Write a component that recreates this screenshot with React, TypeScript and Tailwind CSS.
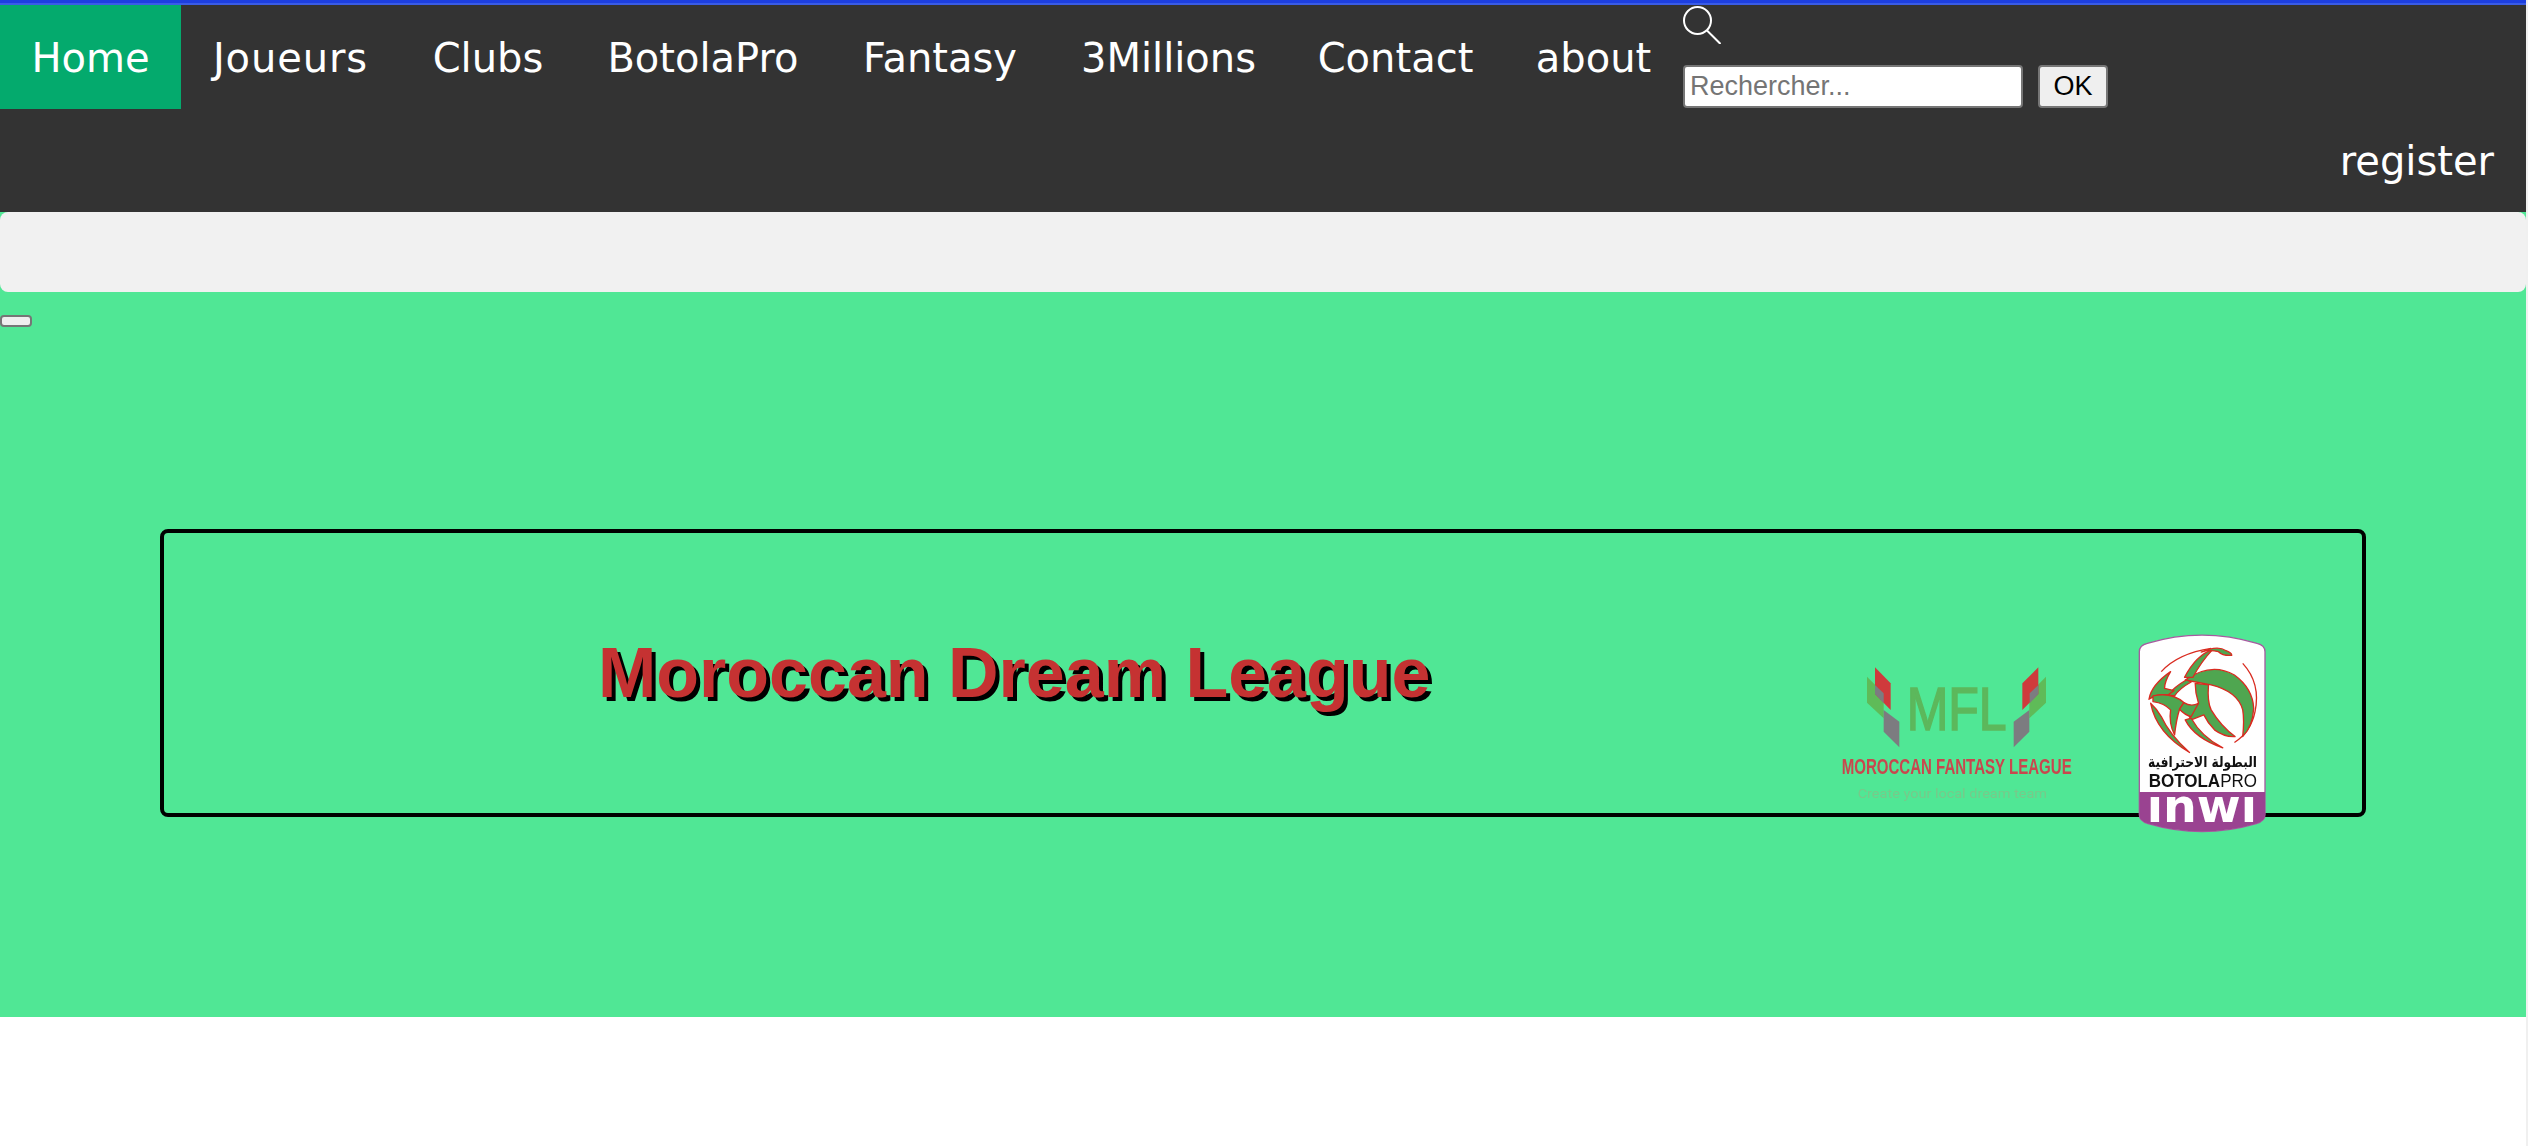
const links = [
  { label: "Home", cls: "w-[181px] bg-[#04aa6d]" },
  { label: "Joueurs", cls: "w-[219px] tracking-[0.9px]" },
  { label: "Clubs", cls: "w-[176px]" },
  { label: "BotolaPro", cls: "w-[254px]" },
  { label: "Fantasy", cls: "w-[220px]" },
  { label: "3Millions", cls: "w-[237px]" },
  { label: "Contact", cls: "w-[217px]" },
  { label: "about", cls: "w-[179px]" },
];

function MflLogo() {
  return (
    <svg viewBox="0 0 780 480" className="w-[260px] h-[160px] shrink-0 blur-[0.5px]">
      {/* left wing */}
      <polygon points="138,80 188,130 188,205 138,158" fill="#5fbb58" />
      <polygon points="162,52 209,100 209,180 162,132" fill="#cf3a3c" />
      <polygon points="162,105 188,130 188,160 162,132" fill="#7c7c80" />
      <polygon points="188,180 235,215 235,292 188,245" fill="#7c7c80" />
      {/* right wing */}
      <polygon points="675,80 625,130 625,205 675,158" fill="#5fbb58" />
      <polygon points="652,52 604,100 604,180 652,132" fill="#cf3a3c" />
      <polygon points="652,105 626,130 626,160 652,132" fill="#7c7c80" />
      <polygon points="625,180 578,215 578,292 625,245" fill="#7c7c80" />
      <text x="257" y="240" fontFamily="Liberation Sans, sans-serif" fontSize="184" fill="#5cb85c" stroke="#5cb85c" strokeWidth="5" textLength="300" lengthAdjust="spacingAndGlyphs">MFL</text>
      <text x="62" y="372" fontFamily="Liberation Sans, sans-serif" fontWeight="700" fontSize="66" fill="#c9474e" textLength="690" lengthAdjust="spacingAndGlyphs">MOROCCAN FANTASY LEAGUE</text>
      <text x="110" y="443" fontFamily="Roboto, sans-serif" fontSize="40" fill="#78c98a" textLength="568" lengthAdjust="spacingAndGlyphs">Create your local dream team</text>
    </svg>
  );
}

// green blades of the crest, in 3x crop coordinates
const blades = [
  "M222 180 Q300 125 370 165 Q425 205 428 265 Q425 320 395 350 Q400 300 395 270 Q380 215 300 195 Z",
  "M305 88 Q255 105 220 172 L245 172 Q270 125 305 88 Z",
  "M270 96 Q320 75 345 92 Q362 98 362 106 Q335 108 322 95 Q295 88 270 96 Z",
  "M225 180 Q190 200 170 225 L190 228 Q205 205 240 186 Z",
  "M252 190 L292 195 Q288 245 300 270 Q330 320 372 350 Q340 352 310 330 Q290 310 278 285 L240 300 L232 285 L262 250 Q252 220 252 190 Z",
  "M113 238 Q120 195 178 155 Q160 185 160 205 L188 212 L170 225 Q135 222 113 238 Z",
  "M125 228 Q180 215 218 248 L205 268 Q195 300 190 345 Q172 310 178 270 Q160 250 125 245 Z",
  "M218 248 Q240 262 262 250 L240 290 Q220 285 205 268 Z",
  "M118 250 Q135 340 235 398 Q175 345 150 290 Q135 265 118 250 Z",
  "M222 300 Q250 355 335 384 Q270 350 240 295 Z",
];

function BotolaLogo() {
  return (
    <svg viewBox="80 42 385 598" className="w-[128px] h-[199px] shrink-0 blur-[0.3px]">
      <defs>
        <clipPath id="badge">
          <path d="M84 95 Q84 76 108 70 Q272 20 438 70 Q462 76 462 95 L462 585 Q462 605 436 612 Q272 660 110 612 Q84 605 84 585 Z" />
        </clipPath>
      </defs>
      <path d="M84 95 Q84 76 108 70 Q272 20 438 70 Q462 76 462 95 L462 585 Q462 605 436 612 Q272 660 110 612 Q84 605 84 585 Z" fill="#ffffff" stroke="#a75aa0" strokeWidth="4" />
      <rect x="80" y="517" width="385" height="130" fill="#9a4391" clipPath="url(#badge)" />
      {/* crest */}
      <path d="M395 130 Q450 190 432 275 Q420 335 370 368" fill="none" stroke="#d92b20" strokeWidth="4" />
      <path d="M150 155 Q200 100 300 85" fill="none" stroke="#d92b20" strokeWidth="4" />
      {blades.map((d) => (
        <path key={d} d={d} fill="#4fa650" stroke="#d92b20" strokeWidth="4" strokeLinejoin="round" />
      ))}
      {/* wording */}
      <text x="110" y="442" direction="rtl" fontFamily="DejaVu Sans, sans-serif" fontWeight="700" fontSize="44" fill="#111111" textLength="328" lengthAdjust="spacingAndGlyphs" textAnchor="end">البطولة الاحترافية</text>
      <text x="112" y="503" fontFamily="Liberation Sans, sans-serif" fontSize="56" fill="#111111" textLength="326" lengthAdjust="spacingAndGlyphs">
        <tspan fontWeight="700">BOTOLA</tspan>
        <tspan>PRO</tspan>
      </text>
      <text x="106" y="606" fontFamily="DejaVu Sans, sans-serif" fontWeight="700" fontSize="140" fill="#ffffff" textLength="332" lengthAdjust="spacingAndGlyphs">ınwı</text>
    </svg>
  );
}

export default function App() {
  return (
    <div className="min-h-[1146px] bg-[#f0f0f0]">
      <div className="min-h-[1146px] bg-white mr-[2px]">
        {/* Top nav */}
        <nav className="bg-[#333333] font-['DejaVu_Sans',sans-serif] text-[40px] leading-[48px] text-white">
          <div className="h-[3px] bg-[#1d3fe0]" />
          <div className="h-[2px] bg-[#3a5ce6]" />
          <div className="flex h-[104px]">
            {links.map((link) => (
              <a key={link.label} href="#" className={`pt-[29px] pb-[27px] text-center ${link.cls}`}>
                {link.label}
              </a>
            ))}
            <div className="flex flex-col pt-px">
              <svg viewBox="0 0 38 38" className="w-[38px] h-[38px]" fill="none" stroke="#ffffff" strokeWidth="2">
                <circle cx="14.5" cy="14.5" r="13.5" />
                <path d="M24 24.5 L37.5 38" />
              </svg>
              <form className="flex gap-[15px] mt-[21px] font-['Liberation_Sans',sans-serif] text-[27px] leading-none">
                <input
                  placeholder="Rechercher..."
                  className="w-[340px] h-[43px] bg-white border-2 border-[#767676] rounded-[4px] px-[5px] text-black placeholder:text-[#757575]"
                />
                <button type="button" className="w-[70px] h-[43px] bg-[#efefef] border-2 border-[#767676] rounded-[4px] text-black">
                  OK
                </button>
              </form>
            </div>
          </div>
          <div className="flex justify-end h-[103px]">
            <a href="#" className="px-8 py-7">register</a>
          </div>
        </nav>

        {/* Hero */}
        <section className="h-[805px] bg-[#50e795] flex flex-col">
          <div className="h-20 bg-[#f1f1f1] rounded-lg" />
          <button type="button" className="mt-[23px] w-8 h-3 bg-[#efefef] border-2 border-[#767676] rounded-[4px]" />
          <div className="mt-[202px] mx-[160px] h-[288px] border-4 border-black rounded-lg flex items-start">
            <h1 className="ml-[434px] mt-[100px] font-['Liberation_Sans',sans-serif] font-bold text-[70px] leading-[80px] text-[#c53232] [text-shadow:4px_4px_0_#000000] whitespace-nowrap">
              Moroccan Dream League
            </h1>
            <div className="ml-auto mr-[96px] flex items-start gap-[57px]">
              <div className="mt-[117px]"><MflLogo /></div>
              <div className="mt-[101px]"><BotolaLogo /></div>
            </div>
          </div>
        </section>
      </div>
    </div>
  );
}
